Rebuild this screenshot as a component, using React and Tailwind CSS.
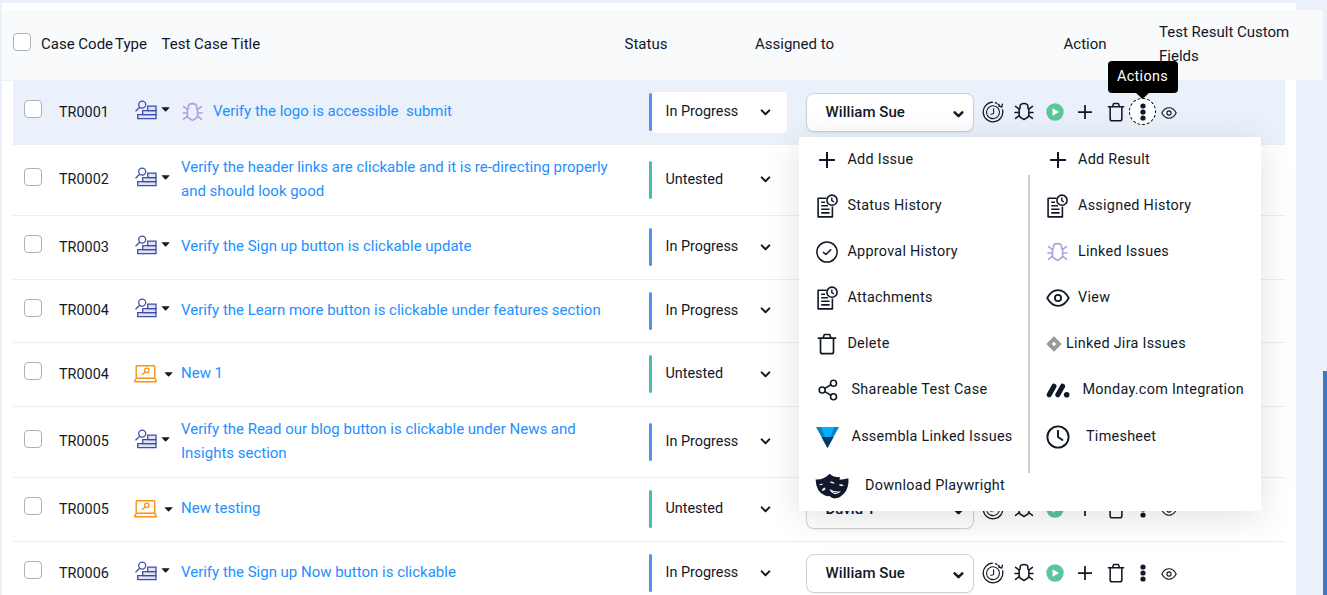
import React from "react";

const line = { fill: "none", stroke: "currentColor", strokeLinecap: "round", strokeLinejoin: "round" };

function BugIcon({ className, strokeWidth = 1.6 }) {
  return (
    <svg className={className} viewBox="0 0 21 20" {...line} strokeWidth={strokeWidth}>
      <path d="M6.4 6.2V4.6Q6.4 1.6 10.5 1.6T14.600 4.600V6.200L15.600 8V13.800Q15.500 15.600 13.200 16.800L10.500 18.400L7.800 16.800Q5.500 15.600 5.400 13.800V8Z" />
      <path d="M1.600 4.600L5.400 7.400M19.400 4.600L15.600 7.400M1 11H5.400M20 11H15.600M1.600 17.200L5.600 14.200M19.400 17.200L15.400 14.200" />
    </svg>
  );
}

function HistoryIcon() {
  return (
    <svg className="size-[22px]" viewBox="0 0 22 22" {...line} strokeWidth="1.300">
      <path d="M10.500 1.200A9.800 9.800 0 1 0 20.600 9" />
      <path d="M13.500 1.600L18 4.600" strokeDasharray="1.600 1.600" />
      <path d="M16.800 5.200L19.800 6L20.400 3.200" />
      <circle cx="11" cy="11.200" r="6.400" strokeWidth="1.100" strokeDasharray="3.500 .9" />
      <path d="M11.600 7.800V12Q11.500 13.200 8.800 13.200" strokeWidth="1.100" />
    </svg>
  );
}

function PlayIcon() {
  return (
    <svg className="size-[18px]" viewBox="0 0 18 18">
      <circle cx="9" cy="9" r="8.700" fill="#5bc59b" />
      <path d="M6.500 5.200L13 9L6.500 12.800Z" fill="#fff" />
    </svg>
  );
}

function PlusIcon({ className }) {
  return (
    <svg className={className} viewBox="0 0 16 16" fill="none" stroke="currentColor" strokeWidth="2">
      <path d="M8 .6V15.400M.6 8H15.400" strokeLinecap="round" />
    </svg>
  );
}

function TrashIcon({ className }) {
  return (
    <svg className={className} viewBox="0 0 20 22" {...line} strokeWidth="1.700">
      <path d="M1.500 5.200H18.500M3.500 5.400V18.700Q3.500 20.700 5.500 20.700H14.500Q16.500 20.700 16.500 18.700V5.400" />
      <path d="M6.200 4.800L7 2.300Q7.200 1.500 8 1.500H12Q12.800 1.500 13 2.300L13.800 4.800" />
    </svg>
  );
}

function DotsIcon() {
  return (
    <svg className="w-[6px] h-[18px]" viewBox="0 0 6 18" fill="currentColor">
      <circle cx="3" cy="3" r="2.600" />
      <circle cx="3" cy="9" r="2.600" />
      <circle cx="3" cy="15" r="2.600" />
    </svg>
  );
}

function EyeIcon({ className, strokeWidth = 1.8 }) {
  return (
    <svg className={className} viewBox="0 0 24 18" {...line} strokeWidth={strokeWidth}>
      <path d="M1.200 9Q5.500 1.200 12 1.200T22.800 9Q18.500 16.800 12 16.800T1.200 9Z" />
      <circle cx="12" cy="9" r="3.100" />
    </svg>
  );
}

function ManualIcon() {
  return (
    <svg className="w-[22px] h-[20px] shrink-0" viewBox="0 0 22 20" fill="none" stroke="#3f4cab" strokeWidth="1.300">
      <circle cx="7.200" cy="4.600" r="3.500" />
      <path d="M4.700 7.300L.5 11.200" />
      <path d="M2.700 14.600H21V18.600H2.700Z" fill="#dfe4f5" />
      <path d="M7.700 10.700H21V14.600H7.700Z" fill="#dfe4f5" />
      <path d="M12.700 6.200H21V10.700H12.700Z" fill="#dfe4f5" />
    </svg>
  );
}

function AutomatedIcon() {
  return (
    <svg className="w-[23px] h-[18px] shrink-0" viewBox="0 0 23 18" fill="none" stroke="#fa9214" strokeWidth="1.400" strokeLinejoin="round">
      <rect x="2.200" y=".8" width="18.600" height="12.500" rx=".8" />
      <path d="M2.200 13.400L.8 15.500V16.800H22.200V15.500L20.800 13.400" />
      <circle cx="12.700" cy="5.300" r="2.200" strokeWidth="1.300" />
      <path d="M11.100 7L8 9.800" strokeWidth="1.300" />
    </svg>
  );
}

function Caret() {
  return (
    <svg className="w-[9px] h-[5px] shrink-0" viewBox="0 0 9 5">
      <path d="M.6 .3H8.600Q8.600 .8 5.100 4.200Q4.600 4.600 4.100 4.200Q.6 .8 .6 .3Z" fill="#111827" />
    </svg>
  );
}

function Chevron({ heavy }) {
  return (
    <svg className="w-[11px] h-[7px] shrink-0" viewBox="0 0 11 7" {...line} strokeWidth={heavy ? 2.5 : 2}>
      <path d="M1.700 1.400L5.500 5.200L9.300 1.400" />
    </svg>
  );
}

function DocClockIcon() {
  return (
    <svg className="w-[21px] h-[24px]" viewBox="0 0 21 24" {...line} strokeWidth="1.600" strokeLinecap="butt">
      <path d="M9.500 4.200H1.100V22.900H15.400V12.500" />
      <path d="M4.200 8.200H8M4.200 11.700H11M4.200 15.300H12.600M4.200 18.900H12.600" />
      <circle cx="15" cy="6.200" r="5.100" />
      <path d="M14.800 3.400V6.600L17 8" strokeWidth="1.400" />
    </svg>
  );
}

function ApprovalIcon() {
  return (
    <svg className="size-[22px]" viewBox="0 0 22 22" {...line} strokeWidth="1.500">
      <circle cx="11" cy="11" r="10.100" />
      <path d="M7.400 11.400L9.900 13.500L14.800 8.700" />
    </svg>
  );
}

function ShareIcon() {
  return (
    <svg className="ml-px w-[20px] h-[22px]" viewBox="0 0 20 22" {...line} strokeWidth="1.600">
      <circle cx="4.200" cy="11" r="3" />
      <circle cx="15.500" cy="4.300" r="3" />
      <circle cx="15.500" cy="17.700" r="3" />
      <path d="M6.800 9.400L12.900 5.800M6.800 12.600L12.900 16.200" />
    </svg>
  );
}

function AssemblaIcon() {
  return (
    <svg className="w-[23px] h-[21px]" viewBox="0 0 23 21">
      <path d="M0 0H23L11.500 21Z" fill="#0d7fc4" />
      <path d="M5 0H18L14.500 10H9Z" fill="#04b0fb" />
      <path d="M5.500 10H17.500L11.500 21Z" fill="#063860" />
    </svg>
  );
}

function MasksIcon() {
  return (
    <svg className="mt-[2px] w-[34px] h-[26px]" viewBox="0 0 34 26">
      <path d="M.6 6.500Q9 7 14.600 .8Q18 4.300 25 4.300L22 20.500Q14 24.500 10 22.500Q1 19 .6 6.500Z" fill="#111a2c" />
      <path d="M10.500 5.200Q21 8.500 33.400 5.200Q34 12 31 18Q26 25.400 19 25.400Q12.500 24 10.500 16Q9.500 10 10.500 5.200Z" fill="#111a2c" />
      <path d="M4 11.800Q6 10.200 8.300 11Q6.500 12.800 4 11.800Z" fill="#fff" />
      <path d="M6.500 17.600Q7.500 15 10.200 14.400L10.500 16Q9.500 18.400 6.500 17.600Z" fill="#fff" />
      <path d="M14.500 9Q17 7.400 20 10.300Q16.800 11 14.500 9Z" fill="#fff" />
      <path d="M23.500 11.800Q26.500 10.300 29 12.600Q26 13.800 23.500 11.800Z" fill="#fff" />
      <path d="M14.500 16Q20 19.500 26 18.300Q23 21.600 19.500 20.900Q16 20 14.500 16Z" fill="#fff" />
      <path d="M17 18.600Q20 19.900 23.500 19.400Q21.500 20.400 19.500 20Q18 19.700 17 18.600Z" fill="#111a2c" />
    </svg>
  );
}

function JiraIcon() {
  return (
    <svg className="size-[16px]" viewBox="0 0 16 16">
      <path d="M8 .3L15.700 8L8 15.700L.3 8ZM8 5.700L5.700 8L8 10.300L10.300 8Z" fill="#999" fillRule="evenodd" />
    </svg>
  );
}

function MondayIcon() {
  return (
    <svg className="w-[24px] h-[15px]" viewBox="0 0 24 15" stroke="currentColor" strokeWidth="5" strokeLinecap="round">
      <path d="M3.200 11.800L8 3.200M11.800 11.800L16.600 3.200" />
      <circle cx="20.700" cy="11.700" r="2.800" fill="currentColor" stroke="none" />
    </svg>
  );
}

function ClockIcon() {
  return (
    <svg className="size-[24px]" viewBox="0 0 24 24" {...line} strokeWidth="1.900">
      <circle cx="12" cy="12" r="10.600" />
      <path d="M12 5.600V12L16.500 15" />
    </svg>
  );
}

function Checkbox() {
  return <span className="block size-[18px] shrink-0 rounded-[4px] border border-[#a9b1bd] bg-white" />;
}

const rows = [
  { code: "TR0001", height: "h-[64px]", manual: true, bug: true, title: "Verify the logo is accessible \u00a0submit", active: true, status: "In Progress", user: "William Sue" },
  { code: "TR0002", height: "h-[71px]", manual: true, title: "Verify the header links are clickable and it is re-directing properly and should look good", status: "Untested", user: "David T" },
  { code: "TR0003", height: "h-[64px]", manual: true, title: "Verify the Sign up button is clickable update", status: "In Progress", user: "William Sue" },
  { code: "TR0004", height: "h-[63px]", manual: true, title: "Verify the Learn more button is clickable under features section", status: "In Progress", user: "William Sue" },
  { code: "TR0004", height: "h-[64px]", manual: false, title: "New 1", status: "Untested", user: "David T" },
  { code: "TR0005", height: "h-[71px]", manual: true, title: "Verify the Read our blog button is clickable under News and Insights section", status: "In Progress", user: "William Sue" },
  { code: "TR0005", height: "h-[64px]", manual: false, title: "New testing", status: "Untested", user: "David T" },
  { code: "TR0006", height: "h-[64px]", manual: true, title: "Verify the Sign up Now button is clickable", status: "In Progress", user: "William Sue" },
];

function Row({ row }) {
  return (
    <div
      className={
        "grid grid-cols-[46px_76px_46px_468px_157px_168px_1fr] items-center border-b border-[#e9eef7] " +
        row.height +
        (row.active ? " bg-[#eaf1fa]" : " bg-white")
      }
    >
      <div className="pl-[11px] pb-[7px]"><Checkbox /></div>
      <div className="text-[14.4px]">{row.code}</div>
      <div className={"flex items-center " + (row.manual ? "-ml-[0.5px] pb-[6px] gap-[4.5px]" : "-ml-px pb-px gap-[7px]")}>
        {row.manual ? <ManualIcon /> : <AutomatedIcon />}
        <Caret />
      </div>
      <div className="flex items-center pb-[3px] text-[#1e90ff]">
        {row.bug && <BugIcon className="w-[21px] h-[20px] mt-[2px] ml-px mr-[10px] text-[#b39ddb]" />}
        <span className="w-[436px] tracking-[-0.01px]">{row.title}</span>
      </div>
      <div className="flex items-center pb-px">
        <span className={"w-[3px] h-[38px] rounded-full " + (row.status === "Untested" ? "bg-[#45bdb5]" : "bg-[#5590f0]")} />
        <div className="flex h-[41px] w-[135px] items-center justify-between rounded-[4px] bg-white pl-[13.500px] pr-[16px]">
          <span className="text-[14.4px]">{row.status}</span>
          <Chevron />
        </div>
      </div>
      <div className="mb-px flex h-[39px] items-center justify-between rounded-[8px] border border-[#cdd1db] bg-white pl-[18.500px] pr-[9px] shadow-[0_1px_2px_rgba(0,0,0,0.06)]">
        <span className="pb-px font-medium tracking-[0.05px]">{row.user}</span>
        <span className="pt-[4px]"><Chevron heavy /></span>
      </div>
      <div className="flex items-center pb-[2px] pl-[8px]">
        <span className="w-[22px]"><HistoryIcon /></span>
        <BugIcon className="ml-[10px] w-[20px] h-[19px]" strokeWidth={1.6} />
        <span className="ml-[12px]"><PlayIcon /></span>
        <PlusIcon className="ml-[14px] size-[14px]" />
        <TrashIcon className="ml-[15px] w-[18px] h-[20px]" />
        {row.active ? (
          <span className="relative ml-[4px] flex size-[27px] items-center justify-center rounded-full border border-dashed border-black bg-white">
            <DotsIcon />
            <span className="absolute bottom-[31px] left-1/2 flex h-[32px] w-[70px] -translate-x-1/2 items-center justify-center rounded-[4px] bg-black pb-px text-[14.4px] tracking-[0.3px] text-white">
              Actions
              <svg className="absolute -bottom-[6px] left-[27px] w-[15px] h-[7px]" viewBox="0 0 15 7"><path d="M0 0H15L7.500 7Z" /></svg>
            </span>
          </span>
        ) : (
          <span className="ml-[4px] flex size-[27px] items-center justify-center"><DotsIcon /></span>
        )}
        <EyeIcon className="mt-[3px] ml-[5px] w-[16px] h-[12px]" strokeWidth={1.7} />
      </div>
    </div>
  );
}

const left = [
  { label: "Add Issue", icon: <PlusIcon className="size-[16px]" />, gap: "w-[32.4px]" },
  { label: "Status History", icon: <DocClockIcon />, gap: "w-[32.4px]" },
  { label: "Approval History", icon: <ApprovalIcon />, gap: "w-[32.4px]" },
  { label: "Attachments", icon: <DocClockIcon />, gap: "w-[32.4px]" },
  { label: "Delete", icon: <TrashIcon className="w-[20px] h-[22px]" />, gap: "w-[32.4px]" },
  { label: "Shareable Test Case", icon: <ShareIcon />, gap: "w-[36.5px]" },
  { label: "Assembla Linked Issues", icon: <AssemblaIcon />, gap: "w-[36.5px]", last: true },
];

const right = [
  { label: "Add Result", icon: <PlusIcon className="size-[16px]" />, gap: "w-[32.5px]" },
  { label: "Assigned History", icon: <DocClockIcon />, gap: "w-[32.5px]" },
  { label: "Linked Issues", icon: <BugIcon className="w-[21px] h-[20px] text-[#b39ddb]" />, gap: "w-[32.5px]" },
  { label: "View", icon: <EyeIcon className="w-[24px] h-[18px]" />, gap: "w-[32.5px]" },
  { label: "Linked Jira Issues", icon: <JiraIcon />, gap: "w-[20.5px]", box: "w-[17px]" },
  { label: "Monday.com Integration", icon: <MondayIcon />, gap: "w-[37px]" },
  { label: "Timesheet", icon: <ClockIcon />, gap: "w-[40.5px]", last: true },
];

function MenuItem({ item }) {
  return (
    <div className={"flex items-center " + (item.last ? "h-[48px]" : "h-[46px]")}>
      <span className={"flex shrink-0 items-center pt-[2px] " + item.gap}>
        <span className={"flex shrink-0 justify-center " + (item.box || "w-[24px]")}>{item.icon}</span>
      </span>
      <span className="whitespace-nowrap pt-px">{item.label}</span>
    </div>
  );
}

export default function App() {
  return (
    <div className="relative h-[595px] w-[1327px] overflow-hidden bg-[#eaf1fa] font-[Roboto,sans-serif] text-[15px] leading-[24px] text-[#111827]">
      <div className="ml-[2px] mt-[3px] h-[592px] w-[1294px] bg-white pt-[7px]">
        <div className="flex h-[70px] w-[1321px] items-center bg-[#f9fafc] pl-[11px]">
          <div className="w-[28px] pb-[6px]"><Checkbox /></div>
          <div className="w-[74px] pb-[2px] whitespace-nowrap">Case Code</div>
          <div className="w-[46.500px] pb-[2px]">Type</div>
          <div className="w-[463px] pb-[2px]">Test Case Title</div>
          <div className="w-[130.500px] pb-[2px]">Status</div>
          <div className="w-[308.500px] pb-[2px]">Assigned to</div>
          <div className="w-[95.500px] pb-[2px]">Action</div>
          <div className="w-[150px] pb-[2px]">Test Result Custom Fields</div>
        </div>
        <div className="h-px w-[1283px] bg-[#eaf1fa]" />
        <div className="ml-[11px] w-[1272px]">
          {rows.map((row, i) => <Row key={i} row={row} />)}
        </div>
      </div>
      <div className="absolute left-[799px] top-[137px] flex h-[374px] w-[462px] rounded-[2px] bg-white text-[14.4px] tracking-[0.28px] shadow-[0_6px_36px_rgba(0,0,0,0.12)]">
        <div className="-mt-px w-[229px] pl-[16px]">
          {left.map((item) => <MenuItem key={item.label} item={item} />)}
          <div className="flex h-[50px] items-center">
            <span className="w-[50px]"><MasksIcon /></span>
            <span className="whitespace-nowrap pt-[2px]">Download Playwright</span>
          </div>
        </div>
        <div className="mt-[38px] h-[298px] w-[2px] bg-[#cbcdd1]" />
        <div className="-mt-px pl-[15.500px]">
          {right.map((item) => <MenuItem key={item.label} item={item} />)}
        </div>
      </div>
      <div className="absolute left-[1323px] top-[371px] h-[224px] w-[4px] bg-[#3f79c3]" />
    </div>
  );
}
